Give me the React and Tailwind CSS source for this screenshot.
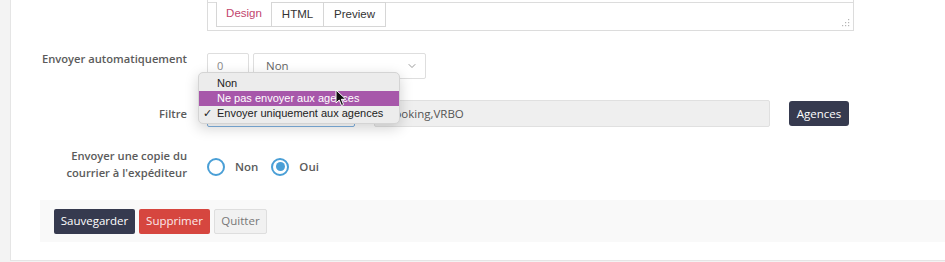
import { ChevronDown } from "lucide-react";

const labelCls =
  "w-[176px] shrink-0 text-right text-[11.2px] font-semibold text-[#5b5b5b] leading-[17px]";

const Radio = ({ checked, label }) => (
  <div className="flex items-center gap-[10px]">
    <div className="w-[18px] h-[18px] rounded-full border-2 border-[#4a9fd6] bg-white flex items-center justify-center">
      {checked && <div className="w-[9px] h-[9px] rounded-full bg-[#4a9fd6]" />}
    </div>
    <span className="text-[11.5px] font-semibold text-[#5b5b5b]">{label}</span>
  </div>
);

const Cursor = () => (
  <svg width="12" height="18" viewBox="0 0 12 18" className="absolute left-[335px] top-[89px] z-30">
    <path
      d="M1 1 L1 14 L4.2 11 L6.5 16.5 L8.6 15.6 L6.4 10.3 L10.8 10.3 Z"
      fill="#111"
      stroke="#fff"
      strokeWidth="1"
      strokeLinejoin="round"
    />
  </svg>
);

export default function App() {
  return (
    <div
      className="relative w-[945px] h-[262px] overflow-hidden bg-[#f3f3f3] flex"
      style={{ fontFamily: '"Open Sans", "Noto Sans", sans-serif' }}
    >
      <div className="w-[10px] shrink-0" />
      <div className="flex-1 h-[261px] bg-white border-l border-b border-[#e5e5e5] flex flex-col">
        {/* editor */}
        <div className="pl-[196px]">
          <div className="relative w-[647px] h-[31px] border border-t-0 border-[#dcdcdc]">
            <div className="h-[3px] border-b border-[#dcdcdc]" />
            <div
              className="flex pl-[8px] -mt-px text-[11.5px]"
              style={{ fontFamily: '"Liberation Sans", Arial, sans-serif' }}
            >
              <div className="w-[56px] h-[25px] border-x border-b border-[#d6d6d6] bg-white flex items-center justify-center text-[#c2466e]">
                Design
              </div>
              <div className="w-[52px] h-[25px] border-t border-r border-b border-[#d6d6d6] flex items-center justify-center text-[#333]">
                HTML
              </div>
              <div className="w-[62px] h-[25px] border-t border-r border-b border-[#d6d6d6] flex items-center justify-center text-[#333]">
                Preview
              </div>
            </div>
            <svg width="8" height="8" viewBox="0 0 8 8" className="absolute right-[3px] bottom-[3px]">
              <g fill="#b5b5b5">
                <rect x="6" y="0" width="1.2" height="1.2" />
                <rect x="3" y="3" width="1.2" height="1.2" />
                <rect x="6" y="3" width="1.2" height="1.2" />
                <rect x="0" y="6" width="1.2" height="1.2" />
                <rect x="3" y="6" width="1.2" height="1.2" />
                <rect x="6" y="6" width="1.2" height="1.2" />
              </g>
            </svg>
          </div>
        </div>

        {/* Envoyer automatiquement */}
        <div className="flex gap-[20px] mt-[22px]">
          <div className={`${labelCls} -mt-[3px]`}>Envoyer automatiquement</div>
          <div className="flex gap-[4px]">
            <div className="w-[42px] h-[26px] border border-[#dedede] rounded-[2px] pl-[9px] flex items-center text-[11px] text-[#8a8a8a]">
              0
            </div>
            <div className="w-[173px] h-[26px] border border-[#dedede] rounded-[2px] pl-[12px] pr-[7px] flex items-center justify-between text-[11.5px] text-[#666]">
              <span>Non</span>
              <ChevronDown size={12} strokeWidth={1.5} className="text-[#777]" />
            </div>
          </div>
        </div>

        {/* Filtre */}
        <div className="flex mt-[21px] items-center">
          <div className={`${labelCls} mr-[20px]`}>Filtre</div>
          <div className="w-[148px] h-[27px] border border-[#7fb1e0] rounded-[2px]" />
          <div className="ml-[19px] w-[396px] h-[27px] bg-[#efefef] border border-[#e0e0e0] rounded-[2px] pl-[12px] flex items-center text-[11.5px] text-[#555]">
            Booking,VRBO
          </div>
          <button className="ml-[19px] w-[60px] h-[25px] rounded-[3px] bg-[#363a4f] text-white text-[11.5px] flex items-center justify-center">
            Agences
          </button>
        </div>

        {/* copie */}
        <div className="flex gap-[20px] mt-[20px] items-center">
          <div className={labelCls}>
            Envoyer une copie du
            <br />
            courrier à l'expéditeur
          </div>
          <div className="flex gap-[13px] items-center mt-[5px]">
            <Radio label="Non" />
            <Radio checked label="Oui" />
          </div>
        </div>

        {/* footer */}
        <div className="ml-[29px] mt-[19px] h-[42px] bg-[#f9f9f9] pl-[14px] flex items-center gap-[4px] text-[11.5px]">
          <button className="w-[81px] h-[25px] rounded-[2px] bg-[#363a4f] text-white">Sauvegarder</button>
          <button className="w-[71px] h-[25px] rounded-[2px] bg-[#d6463f] text-[#fbeaea]">Supprimer</button>
          <button className="w-[53px] h-[25px] rounded-[2px] bg-[#f1f1f1] border border-[#dedede] text-[#777]">
            Quitter
          </button>
        </div>
      </div>

      {/* open select menu */}
      <div
        className="absolute left-[198px] top-[72px] w-[202px] h-[52px] rounded-[5px] bg-[#ececec] border border-[#d4d4d4] shadow-[0_4px_14px_rgba(0,0,0,0.18)] pt-[3px] pb-[4px] text-[11px] z-20"
        style={{ fontFamily: '"Liberation Sans", Arial, sans-serif' }}
      >
        <div className="h-[15px] pl-[18px] flex items-center text-[#222]">Non</div>
        <div className="h-[15px] pl-[18px] flex items-center bg-[#a757aa] text-white">
          Ne pas envoyer aux agences
        </div>
        <div className="h-[15px] flex items-center text-[#222]">
          <span className="w-[18px] pl-[4px] text-[11px]">✓</span>
          Envoyer uniquement aux agences
        </div>
      </div>
      <Cursor />
    </div>
  );
}
